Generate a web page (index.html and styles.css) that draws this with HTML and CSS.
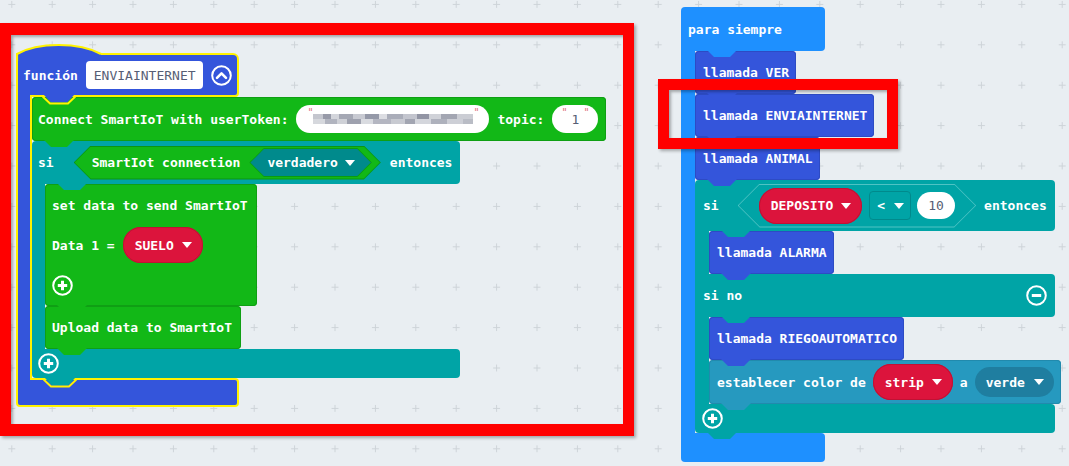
FILE: index.html
```html
<!DOCTYPE html>
<html lang="es">
<head>
    <meta charset="UTF-8">
    <meta name="viewport" content="width=device-width, initial-scale=1.0">
    <title>Bloques</title>

    <link rel="stylesheet" href="styles.css">
</head>
<body>

<div class="workspace">

    <svg class="grid" width="1069" height="466">
        <defs>
            <pattern id="cruces" width="40.4" height="40.4" x="-8.4" y="-15.8" patternUnits="userSpaceOnUse">
                <path d="M16.7 20.2 H23.7 M20.2 16.7 V23.7" stroke="#cdd3d8" stroke-width="1"/>
            </pattern>
        </defs>
        <rect width="1069" height="466" fill="url(#cruces)"/>
    </svg>

    <!-- funcion ENVIAINTERNET -->
    <div class="stack fn-stack">
        <div class="fn">
            <div class="fn-head">
                <svg class="hat" width="88" height="20" viewBox="0 0 88 20">
                    <path d="M1 20 V13 C22 1 63 1 85 13 V20 Z" fill="#3455db"/>
                    <path d="M1 20 V13 C22 1 63 1 85 13" fill="none" stroke="#fff200" stroke-width="2.2"/>
                </svg>
                <span>función</span>
                <span class="field">ENVIAINTERNET</span>
                <svg class="round-btn" width="21" height="21" viewBox="0 0 21 21">
                    <circle cx="10.5" cy="10.5" r="9.3" fill="none" stroke="#fff" stroke-width="2"/>
                    <path d="M6 12.8 L10.5 8.3 L15 12.8" fill="none" stroke="#fff" stroke-width="2.6" stroke-linecap="round" stroke-linejoin="round"/>
                </svg>
                <svg class="fn-tab" width="34" height="10" viewBox="0 0 34 10">
                    <path d="M2 0 H32 L25 7.5 H9 Z" fill="#3455db"/>
                    <path d="M0 1 L8 8.5 H26 L34 1" fill="none" stroke="#fff200" stroke-width="2"/>
                </svg>
            </div>
            <div class="fn-body">
                <div class="fn-arm"></div>
                <div class="fn-inner">

                    <div class="blk iot connect tab">
                        <span>Connect SmartIoT with userToken:</span>
                        <span class="token"><span class="q ql">"</span><span class="redact"></span><span class="q qr">"</span></span>
                        <span>topic:</span>
                        <span class="str"><span class="q ql">"</span>1<span class="q qr">"</span></span>
                    </div>

                    <div class="cblk logic if-left">
                        <div class="c-row c-top tab">
                            <span class="kw">si</span>
                            <span class="hex hex-bool">
                                <span class="hex-in">
                                    <span>SmartIot connection</span>
                                    <span class="hex hex-val">
                                        <span class="hex-in"><span>verdadero</span><span class="caret"></span></span>
                                    </span>
                                </span>
                            </span>
                            <span>entonces</span>
                        </div>
                        <div class="c-body">
                            <div class="c-arm"></div>
                            <div class="c-inner">
                                <div class="blk iot set-data tab">
                                    <div class="line"><span>set data to send SmartIoT</span></div>
                                    <div class="line">
                                        <span>Data 1 =</span>
                                        <span class="pill var"><span>SUELO</span><span class="caret"></span></span>
                                    </div>
                                    <div class="line">
                                        <svg class="round-btn" width="21" height="21" viewBox="0 0 21 21">
                                            <circle cx="10.5" cy="10.5" r="9.3" fill="none" stroke="#fff" stroke-width="2"/>
                                            <path d="M10.5 5.8 V15.2 M5.8 10.5 H15.2" stroke="#fff" stroke-width="3"/>
                                        </svg>
                                    </div>
                                </div>
                                <div class="blk iot tab"><span>Upload data to SmartIoT</span></div>
                            </div>
                        </div>
                        <div class="c-row c-bottom">
                            <svg class="round-btn" width="21" height="21" viewBox="0 0 21 21">
                                <circle cx="10.5" cy="10.5" r="9.3" fill="none" stroke="#fff" stroke-width="2"/>
                                <path d="M10.5 5.8 V15.2 M5.8 10.5 H15.2" stroke="#fff" stroke-width="3"/>
                            </svg>
                            <svg class="if-tab" width="34" height="10" viewBox="0 0 34 10">
                                <path d="M2 0 H32 L25 7.5 H9 Z" fill="#00a4a6"/>
                                <path d="M0 1 L8 8.5 H26 L34 1" fill="none" stroke="#fff200" stroke-width="2"/>
                            </svg>
                        </div>
                    </div>

                </div>
            </div>
            <div class="fn-foot"></div>
        </div>
    </div>

    <!-- para siempre -->
    <div class="stack forever-stack">
        <div class="cblk forever">
            <div class="c-row c-top tab"><span>para siempre</span></div>
            <div class="c-body">
                <div class="c-arm"></div>
                <div class="c-inner">
                    <div class="blk call tab"><span>llamada VER</span></div>
                    <div class="blk call tab"><span>llamada ENVIAINTERNET</span></div>
                    <div class="blk call tab"><span>llamada ANIMAL</span></div>

                    <div class="cblk logic if-else">
                        <div class="c-row c-top tab">
                            <span class="kw">si</span>
                            <span class="hex hex-cond">
                                <span class="hex-in">
                                    <span class="pill var"><span>DEPOSITO</span><span class="caret"></span></span>
                                    <span class="cmp"><span>&lt;</span><span class="caret"></span></span>
                                    <span class="num">10</span>
                                </span>
                            </span>
                            <span>entonces</span>
                        </div>
                        <div class="c-body">
                            <div class="c-arm"></div>
                            <div class="c-inner">
                                <div class="blk call tab"><span>llamada ALARMA</span></div>
                            </div>
                        </div>
                        <div class="c-row c-mid tab">
                            <span>si no</span>
                            <svg class="round-btn" width="21" height="21" viewBox="0 0 21 21">
                                <circle cx="10.5" cy="10.5" r="9.3" fill="none" stroke="#fff" stroke-width="2"/>
                                <path d="M5.8 10.5 H15.2" stroke="#fff" stroke-width="3"/>
                            </svg>
                        </div>
                        <div class="c-body">
                            <div class="c-arm"></div>
                            <div class="c-inner">
                                <div class="blk call tab"><span>llamada RIEGOAUTOMATICO</span></div>
                                <div class="blk neo tab">
                                    <span>establecer color de</span>
                                    <span class="pill var"><span>strip</span><span class="caret"></span></span>
                                    <span>a</span>
                                    <span class="pill color"><span>verde</span><span class="caret"></span></span>
                                </div>
                            </div>
                        </div>
                        <div class="c-row c-bottom tab">
                            <svg class="round-btn" width="21" height="21" viewBox="0 0 21 21">
                                <circle cx="10.5" cy="10.5" r="9.3" fill="none" stroke="#fff" stroke-width="2"/>
                                <path d="M10.5 5.8 V15.2 M5.8 10.5 H15.2" stroke="#fff" stroke-width="3"/>
                            </svg>
                        </div>
                    </div>
                </div>
            </div>
            <div class="c-row c-bottom"></div>
        </div>
    </div>

    <!-- marcas rojas -->
    <div class="mark mark-fn"></div>
    <div class="mark mark-call"></div>

</div>

</body>
</html>
```

FILE: styles.css
```css
body{
    margin: 0;
}

.workspace{
    position: relative;
    width: 1069px;
    height: 466px;
    overflow: hidden;
    background: #e9eef2;
    font: bold 13px "DejaVu Sans Mono", monospace;
    color: #fff;
    white-space: nowrap;
}

.grid{
    position: absolute;
    left: 0;
    top: 0;
}

.stack{
    position: absolute;
}

.fn-stack{
    left: 16px;
    top: 53px;
}

.forever-stack{
    left: 681px;
    top: 7px;
}

/* bloques simples */

.blk{
    position: relative;
    display: flex;
    align-items: center;
    gap: 8px;
    width: max-content;
    height: 43px;
    box-sizing: border-box;
    padding: 0 7px 0 8px;
    background: var(--c);
    border-radius: 4px;
    box-shadow: inset 0 0 0 1px var(--d);
}

.call{
    --c: #3455db;
    --d: #2d4bc4;
}

.iot{
    --c: #12b817;
    --d: #0f9f14;
    padding: 0 9px 0 7px;
}

.neo{
    --c: #2699bf;
    --d: #218aad;
    height: 44px;
    gap: 7px;
}

.connect{
    height: 44px;
    padding: 0 8px 0 6px;
}

.set-data{
    flex-direction: column;
    align-items: flex-start;
    gap: 0;
    height: auto;
    padding: 1px 9px 1px 7px;
}

.line{
    display: flex;
    align-items: center;
    gap: 8px;
    height: 40px;
}

/* muesca bajo cada bloque */
.tab::after{
    content: "";
    position: absolute;
    z-index: 2;
    left: var(--tx, 12px);
    top: calc(100% - 1px);
    width: 30px;
    height: 7px;
    background: var(--c);
    clip-path: polygon(0 0, 100% 0, 23px 100%, 7px 100%);
}

/* bloques en C */

.cblk{
    display: flex;
    flex-direction: column;
}

.logic{
    --c: #00a4a6;
}

.forever{
    --c: #1e90ff;
    width: 144px;
}

.if-left{
    width: 428px;
}

.if-else{
    width: 360px;
}

.c-row{
    position: relative;
    display: flex;
    align-items: center;
    gap: 8px;
    box-sizing: border-box;
    background: var(--c);
}

.c-top{
    --tx: 26px;
    height: 44px;
    padding-left: 7px;
    border-radius: 4px 4px 4px 0;
}

.c-mid{
    --tx: 26px;
    height: 43px;
    padding: 0 8px;
    justify-content: space-between;
    border-radius: 0 4px 4px 0;
}

.c-bottom{
    height: 29px;
    padding-left: 7px;
    border-radius: 0 4px 4px 4px;
}

.c-body{
    display: flex;
}

.c-arm{
    flex: none;
    width: 14px;
    background: var(--c);
}

.c-inner{
    display: flex;
    flex-direction: column;
    align-items: flex-start;
}

.if-left .c-top{
    --tx: 25px;
    height: 43px;
    padding-left: 6px;
    gap: 9px;
}

.if-left .c-arm{
    width: 13px;
}

.if-left .c-bottom{
    padding-left: 6px;
}

.if-else .c-top{
    height: 51px;
    padding-left: 8px;
}

.kw{
    margin-right: 11px;
}

/* funcion */

.fn{
    --c: #3455db;
    width: 223px;
}

.fn-head{
    position: relative;
    display: flex;
    align-items: center;
    gap: 8px;
    height: 44px;
    box-sizing: border-box;
    padding-left: 5px;
    background: var(--c);
    border: 2px solid #fff200;
    border-radius: 0 6px 4px 0;
}

.hat{
    position: absolute;
    left: -2px;
    top: -14px;
}

.fn-tab{
    position: absolute;
    z-index: 2;
    left: 24px;
    top: 100%;
}

.if-tab{
    position: absolute;
    z-index: 2;
    left: 11px;
    top: 100%;
}

.fn-body{
    display: flex;
}

.fn-arm{
    position: relative;
    z-index: 1;
    flex: none;
    width: 16px;
    box-sizing: border-box;
    margin: -2px 0;
    background: var(--c);
    border-left: 2px solid #fff200;
    border-right: 2px solid #fff200;
}

.fn-inner{
    display: flex;
    flex-direction: column;
    align-items: flex-start;
}

.fn-foot{
    height: 29px;
    box-sizing: border-box;
    background: var(--c);
    border: 2px solid #fff200;
    border-radius: 0 4px 4px 4px;
}

/* campos */

.field{
    display: flex;
    align-items: center;
    height: 28px;
    padding: 0 7px 0 8px;
    background: #fff;
    color: #575e75;
    font-weight: normal;
    border-radius: 4px;
}

.round-btn{
    display: block;
    flex: none;
}

.token{
    position: relative;
    display: flex;
    align-items: center;
    justify-content: center;
    width: 193px;
    height: 28px;
    background: #fff;
    border-radius: 14px;
}

.redact{
    width: 160px;
    height: 10px;
    background:
        linear-gradient(90deg, #c4c6ce 0 10px, #979aa8 10px 18px, #d3d5db 18px 26px, #a5a8b4 26px 40px, #c8cad2 40px 52px, #9599a8 52px 66px, #dcdde2 66px 74px, #aaadb9 74px 90px, #c3c5ce 90px 104px, #9295a4 104px 116px, #d0d2d8 116px 128px, #a3a6b2 128px 144px, #cbcdd4 144px 160px) top / 100% 5px no-repeat,
        linear-gradient(90deg, #d6d8dd 0 12px, #b1b4bf 12px 24px, #cfd1d7 24px 34px, #9ea1ae 34px 48px, #d9dbe0 48px 60px, #b4b6c1 60px 78px, #c8cad1 78px 92px, #a2a5b1 92px 102px, #d4d6dc 102px 118px, #aeb1bc 118px 134px, #cdcfd6 134px 150px, #b9bcc5 150px 160px) bottom / 100% 5px no-repeat;
}

.str{
    position: relative;
    display: flex;
    align-items: center;
    justify-content: center;
    width: 46px;
    height: 28px;
    background: #fff;
    border-radius: 14px;
    color: #575e75;
    font-weight: normal;
}

.q{
    position: absolute;
    top: 3px;
    font-size: 10px;
    line-height: 1;
    color: #e0737d;
    font-weight: normal;
}

.ql{
    left: 9px;
}

.qr{
    right: 9px;
}

.token .ql{
    left: 11px;
}

.token .qr{
    right: 10px;
}

.pill{
    display: flex;
    align-items: center;
    gap: 8px;
    box-sizing: border-box;
}

.var{
    height: 36px;
    padding: 0 11px 0 12px;
    background: #dc143c;
    border-radius: 18px;
    box-shadow: inset 0 0 0 1px #c01234;
}

.color{
    height: 30px;
    padding: 0 10px 0 11px;
    gap: 9px;
    background: #1f7ea0;
    border-radius: 15px;
}

.caret{
    width: 0;
    height: 0;
    border-left: 5px solid transparent;
    border-right: 5px solid transparent;
    border-top: 6px solid #fff;
}

.cmp{
    display: flex;
    align-items: center;
    gap: 9px;
    height: 29px;
    box-sizing: border-box;
    margin-left: 1px;
    padding: 0 6px 0 7px;
    border: 1px solid #008a8c;
    border-radius: 4px;
}

.num{
    display: flex;
    align-items: center;
    justify-content: center;
    width: 38px;
    height: 27px;
    background: #fff;
    border-radius: 14px;
    color: #575e75;
    font-weight: normal;
}

/* hexagonos */

.hex{
    display: flex;
    box-sizing: border-box;
    padding: 1px;
    background: var(--hb);
    clip-path: polygon(var(--k) 0, calc(100% - var(--k)) 0, 100% 50%, calc(100% - var(--k)) 100%, var(--k) 100%, 0 50%);
}

.hex-in{
    display: flex;
    align-items: center;
    background: var(--hf);
    clip-path: polygon(calc(var(--k) - 1px) 0, calc(100% - var(--k) + 1px) 0, 100% 50%, calc(100% - var(--k) + 1px) 100%, calc(var(--k) - 1px) 100%, 0 50%);
}

.hex-bool{
    --k: 17px;
    --hb: #0c9611;
    height: 34px;
}

.hex-bool > .hex-in{
    --hf: #12b817;
    padding: 0 8px 0 17px;
    gap: 9px;
}

.hex-val{
    --k: 14.5px;
    --hb: #0b9a10;
    height: 29px;
}

.hex-val > .hex-in{
    --hf: #008a8c;
    padding: 0 16px 0 17px;
    gap: 7px;
}

.hex-cond{
    --k: 22px;
    --hb: #4fc3c4;
    height: 44px;
}

.hex-cond > .hex-in{
    --hf: #00a4a6;
    padding: 0 20px;
    gap: 6px;
}

/* marcas rojas */

.mark{
    position: absolute;
    z-index: 10;
    box-sizing: border-box;
    border: solid #ff0000;
    box-shadow: 2px 2px 3px rgba(0, 0, 0, 0.3), inset 2px 2px 3px rgba(0, 0, 0, 0.3);
}

.mark-fn{
    left: 0;
    top: 23px;
    width: 634px;
    height: 413px;
    border-width: 12px 11px;
}

.mark-call{
    left: 658px;
    top: 79px;
    width: 240px;
    height: 70px;
    border-width: 11px;
}
```
